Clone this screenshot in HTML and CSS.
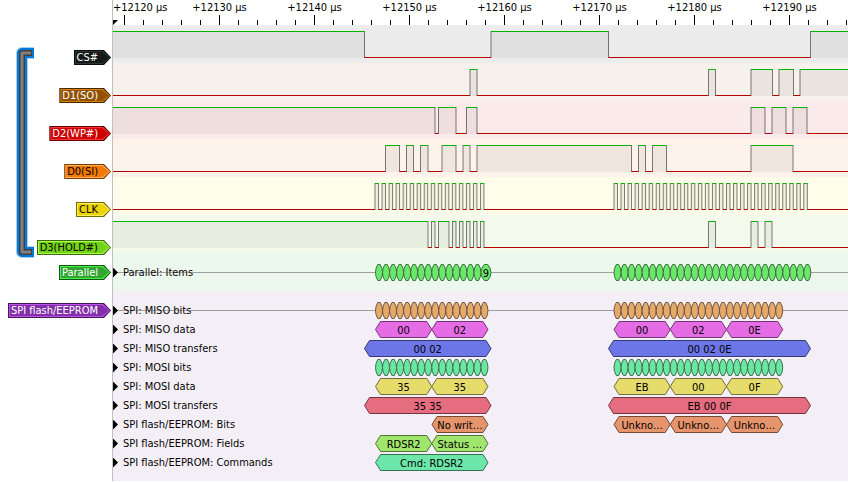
FILE: index.html
```html
<!DOCTYPE html>
<html lang="en">
<head>
    <meta charset="UTF-8">
    <title>SPI flash capture</title>
    <link rel="stylesheet" href="styles.css">
</head>
<body>
    <div class="view">
        <aside class="header">
            <svg class="group" width="20" height="214" viewBox="0 0 20 214">
                <path class="group-halo" d="M18 8H6V207H18"/>
                <path class="group-select" d="M18 8H6V207H18"/>
                <path class="group-edge" d="M16 8H6V207H16"/>
                <path class="group-line" d="M15 8H6V207H15"/>
            </svg>
            <div class="tags">
                <button class="tag cs"><span>CS#</span></button>
                <button class="tag d1"><span>D1(SO)</span></button>
                <button class="tag d2"><span>D2(WP#)</span></button>
                <button class="tag d0"><span>D0(SI)</span></button>
                <button class="tag clk"><span>CLK</span></button>
                <button class="tag d3"><span>D3(HOLD#)</span></button>
                <button class="tag parallel"><span>Parallel</span></button>
                <button class="tag spi"><span>SPI flash/EEPROM</span></button>
            </div>
        </aside>
        <main class="plot">
            <svg class="ruler" id="ruler"></svg>
            <svg class="wave cs" data-signal="cs"></svg>
            <svg class="wave d1" data-signal="d1"></svg>
            <svg class="wave d2" data-signal="d2"></svg>
            <svg class="wave d0" data-signal="d0"></svg>
            <svg class="wave clk" data-signal="clk"></svg>
            <svg class="wave d3" data-signal="d3"></svg>
            <section class="decoder parallel">
                <div class="row line"><span class="arrow"></span><span class="name">Parallel: Items</span><svg data-row="items"></svg></div>
            </section>
            <section class="decoder spi">
                <div class="row line"><span class="arrow"></span><span class="name">SPI: MISO bits</span><svg data-row="misoBits"></svg></div>
                <div class="row"><span class="arrow"></span><span class="name">SPI: MISO data</span><svg data-row="misoData"></svg></div>
                <div class="row"><span class="arrow"></span><span class="name">SPI: MISO transfers</span><svg data-row="misoTransfers"></svg></div>
                <div class="row"><span class="arrow"></span><span class="name">SPI: MOSI bits</span><svg data-row="mosiBits"></svg></div>
                <div class="row"><span class="arrow"></span><span class="name">SPI: MOSI data</span><svg data-row="mosiData"></svg></div>
                <div class="row"><span class="arrow"></span><span class="name">SPI: MOSI transfers</span><svg data-row="mosiTransfers"></svg></div>
                <div class="row"><span class="arrow"></span><span class="name">SPI flash/EEPROM: Bits</span><svg data-row="flashBits"></svg></div>
                <div class="row"><span class="arrow"></span><span class="name">SPI flash/EEPROM: Fields</span><svg data-row="flashFields"></svg></div>
                <div class="row"><span class="arrow"></span><span class="name">SPI flash/EEPROM: Commands</span><svg data-row="flashCommands"></svg></div>
            </section>
        </main>
    </div>
    <script src="trace.js"></script>
</body>
</html>
```
FILE: styles.css
```css
body { margin: 0; background: #fff; color: #000; font-family: "DejaVu Sans Condensed", "DejaVu Sans", sans-serif; font-size: 11px; }
svg { display: block; overflow: hidden; }

.view { display: grid; grid-template-columns: 112px 1fr; }
.header { display: flex; justify-content: space-between; padding: 45px 1px 0 16px; }
.group { flex: none; }
.group path { fill: none; stroke-linejoin: round; }
.group-halo { stroke: #a6d0f3; stroke-width: 12; }
.group-select { stroke: #0078d7; stroke-width: 10; }
.group-edge { stroke: #404040; stroke-width: 6; }
.group-line { stroke: #808080; stroke-width: 3; }

/* signal labels */
.tags { display: flex; flex-direction: column; align-items: flex-end; gap: 23px; padding-top: 5px; width: 0; flex: 1; }
.tag { position: relative; height: 15px; padding: 0 13px 0 3px; border: 0; font: inherit; line-height: 15px; white-space: nowrap; color: #000; background: var(--edge); }
.tag, .tag::before, .tag::after { clip-path: polygon(0 0, calc(100% - 7px) 0, 100% 50%, calc(100% - 7px) 100%, 0 100%); }
.tag::before, .tag::after { content: ""; position: absolute; inset: 1px; background: var(--light); }
.tag::after { inset: 2px; background: var(--fill); }
.tag span { position: relative; z-index: 1; }
.tag.cs { --fill: #16191a; --light: #2c3334; --edge: #0b0c0d; color: #fff; }
.tag.d1 { --fill: #8f5202; --light: #d97d04; --edge: #472901; color: #fff; }
.tag.d2 { --fill: #cc0000; --light: #ff3030; --edge: #660000; color: #fff; }
.tag.d0 { --fill: #f57900; --light: #ffb060; --edge: #7a3c00; }
.tag.clk { --fill: #edd400; --light: #fff060; --edge: #766a00; }
.tag.d3 { --fill: #73d216; --light: #a8ff50; --edge: #39690b; }
.tag.parallel { --fill: #33a532; --light: #40f840; --edge: #195219; color: #fff; margin-top: -13px; }
.tag.spi { --fill: #8330a8; --light: #c050f0; --edge: #411854; color: #fff; }

/* trace area */
.plot { border-left: 1px solid #c0c0c0; min-width: 0; }
.ruler { width: 100%; height: 25px; background: #fff; }
.tick { stroke: #000; }
.wave { width: 100%; height: 38px; }
.wave.cs { background: #ececec; }
.wave.d1 { background: #f6f1ea; }
.wave.d2 { background: #fbeaea; }
.wave.d0 { background: #fef3ea; }
.wave.clk { background: #fefdea; }
.wave.d3 { background: #f4faeb; }
.area { fill: #000; fill-opacity: 0.05; }
.high { stroke: #00b400; }
.low { stroke: #b40000; }
.edge { stroke: #000; stroke-opacity: 0.5; }

.decoder { padding: 10px 0 9px; }
.decoder.parallel { background: #ecf7ed; }
.decoder.spi { background: #f4eef7; }
.row { display: grid; grid-template-columns: 5px 1fr; column-gap: 5px; height: 19px; align-items: center; }
.row > * { grid-row: 1; }
.row.line { background: linear-gradient(#a0a0a0, #a0a0a0) 0 9px / 100% 1px no-repeat; }
.row svg { grid-column: 1 / -1; width: 100%; height: 19px; }
.arrow { grid-column: 1; width: 5px; height: 10px; background: #000; clip-path: polygon(0 0, 100% 50%, 0 100%); }
.name { grid-column: 2; text-shadow: 0 0 1px #fff; }
text { font-size: 11px; text-anchor: middle; }
text.start { text-anchor: start; }
```
FILE: trace.js
```js
const NS = 'http://www.w3.org/2000/svg';
const END = 4000;
const BIT = 7.03;

function add(svg, name, attrs, text) {
    const el = document.createElementNS(NS, name);
    for (const key in attrs) el.setAttribute(key, attrs[key]);
    if (text) el.textContent = text;
    svg.appendChild(el);
}

function clock(start, count) {
    const edges = [];
    for (let i = 0; i < count; i++) edges.push(start + i * BIT, start + i * BIT + BIT / 2);
    return edges;
}

// ruler: 9.5px per microsecond, one tick every 2us
const ruler = document.getElementById('ruler');

function drawRuler() {
    const width = ruler.getBoundingClientRect().width;
    ruler.replaceChildren();
    for (let i = 0; 11.5 + i * 19 < width; i++) {
        const x = 11.5 + i * 19;
        const major = i % 5 === 0;
        add(ruler, 'line', { class: 'tick', x1: x, x2: x, y1: major ? 15 : 20, y2: 25 });
        if (major && x + 28 < width) {
            add(ruler, 'text', { class: i ? 'label' : 'label start', x: i ? x : 0, y: 11 }, '+' + (12120 + i * 2) + ' µs');
        }
    }
    add(ruler, 'path', { d: 'M0 20H5L0 25Z' });
}
drawRuler();
window.addEventListener('resize', drawRuler);

// level before the first edge, then the x of every edge
const signals = {
    cs: [1, 251.5, 378, 495.5, 697.5],
    d1: [0, 357, 364, 595.5, 602.5, 638, 659.5, 666, 680.5, 687],
    d2: [1, 322, 325.5, 343, 353.5, 364, 638, 652, 659, 673, 680, 694],
    d0: [0, 272.5, 286.5, 293.5, 300.5, 307.5, 315, 329, 343, 350, 357, 364, 518.5, 525.5, 532.5, 539.5, 553.5, 638, 680],
    clk: [0].concat(clock(262, 16), clock(501, 28)),
    d3: [1, 315, 318.5, 322, 325.5, 336, 339.5, 343, 346.5, 350, 353.5, 357, 360.5, 364, 367.5, 371, 595.5, 602.5, 638, 645, 652, 659]
};

document.querySelectorAll('.wave').forEach(svg => {
    const edges = signals[svg.dataset.signal];
    let level = edges[0];
    let x = 0;
    edges.slice(1).concat(END).forEach(next => {
        const y = level ? 6.5 : 32.5;
        if (level) add(svg, 'rect', { class: 'area', x: x, y: 6, width: next - x, height: 27 });
        if (next < END) add(svg, 'line', { class: 'edge', x1: next, x2: next, y1: 6, y2: 33 });
        add(svg, 'line', { class: level ? 'high' : 'low', x1: x, x2: next, y1: y, y2: y });
        x = next;
        level = level ? 0 : 1;
    });
});

function bits(start, count) {
    const list = [];
    for (let i = 0; i < count; i++) list.push([start + i * BIT, start + (i + 1) * BIT, '']);
    return list;
}

function bytes(start, labels) {
    return labels.map((label, i) => [start + i * BIT * 8, start + (i + 1) * BIT * 8, label]);
}

const rows = {
    items: ['#6ce66c', '#367336', bits(262.5, 15).concat([[368, 378, '9']], bits(501, 28))],
    misoBits: ['#e6a96c', '#735436', bits(262.5, 16).concat(bits(501, 24))],
    misoData: ['#e66ce6', '#733673', bytes(262.5, ['00', '02']).concat(bytes(501, ['00', '02', '0E']))],
    misoTransfers: ['#6c76e6', '#363b73', [[251.5, 378, '00 02'], [495.5, 697.5, '00 02 0E']]],
    mosiBits: ['#6ce6a0', '#367350', bits(262.5, 16).concat(bits(501, 24))],
    mosiData: ['#e6dc6c', '#736e36', bytes(262.5, ['35', '35']).concat(bytes(501, ['EB', '00', '0F']))],
    mosiTransfers: ['#e66c80', '#733640', [[251.5, 378, '35 35'], [495.5, 697.5, 'EB 00 0F']]],
    flashBits: ['#e6946c', '#734a36', [[319, 375, 'No writ…']].concat(bytes(501, ['Unkno…', 'Unkno…', 'Unkno…']))],
    flashFields: ['#a0e66c', '#507336', bytes(262.5, ['RDSR2', 'Status …'])],
    flashCommands: ['#6ce6a9', '#367354', [[262.5, 375, 'Cmd: RDSR2']]]
};

document.querySelectorAll('[data-row]').forEach(svg => {
    const [fill, stroke, notes] = rows[svg.dataset.row];
    notes.forEach(([a, b, label]) => {
        const cap = Math.min(5, (b - a) / 3);
        // small items get rounded ends, wide ones get pointed ends
        const d = b - a < 12
            ? `M${a} 9.5Q${a} 5 ${a + cap} 1.5H${b - cap}Q${b} 5 ${b} 9.5Q${b} 14 ${b - cap} 17.5H${a + cap}Q${a} 14 ${a} 9.5Z`
            : `M${a} 9.5L${a + cap} 1.5H${b - cap}L${b} 9.5L${b - cap} 17.5H${a + cap}Z`;
        add(svg, 'path', { d: d, fill: fill, stroke: stroke });
        if (label) add(svg, 'text', { x: (a + b) / 2, y: 14 }, label);
    });
});
```
